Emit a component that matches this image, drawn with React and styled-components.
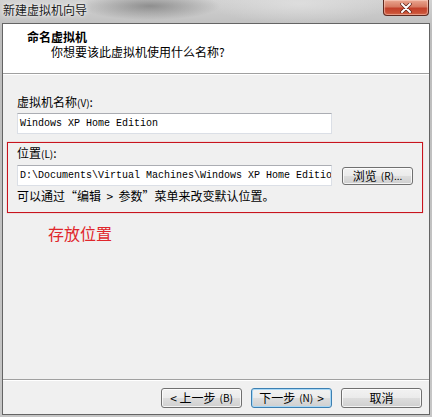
import React from 'react';
import styled, { createGlobalStyle } from 'styled-components';

const GlobalStyle = createGlobalStyle`
  html, body { margin: 0; padding: 0; }
  body {
    width: 432px;
    height: 417px;
    overflow: hidden;
    font-family: "Noto Sans CJK SC", "DejaVu Sans", sans-serif;
    font-size: 12px;
    color: #000;
  }
`;

const cjk = `"Noto Sans CJK SC", "DejaVu Sans", sans-serif`;

const Frame = styled.div`
  width: 432px;
  height: 417px;
  display: flex;
  flex-direction: column;
  box-sizing: border-box;
  background:
    radial-gradient(ellipse 70px 14px at 150px 6px, rgba(90, 90, 90, 0.55), transparent),
    radial-gradient(ellipse 90px 20px at 300px 4px, rgba(230, 230, 230, 0.6), transparent),
    linear-gradient(180deg, #d2d2d2 0%, #bdbdbd 30px, #c6c6c6 100%);
`;

const TitleBar = styled.div`
  height: 23px;
  display: flex;
  justify-content: space-between;
  align-items: flex-start;
  padding: 0 2px 0 3px;
  flex-shrink: 0;
`;

const TitleText = styled.div`
  font-family: ${cjk};
  font-size: 12px;
  line-height: 14px;
  margin-top: 3px;
  color: #1a1a1a;
  text-shadow: 0 0 6px rgba(255, 255, 255, 0.9), 0 0 3px rgba(255, 255, 255, 0.9);
`;

const CloseButton = styled.div`
  width: 46px;
  height: 16px;
  margin-right: 1px;
  box-sizing: border-box;
  border: 1px solid #5e2a20;
  border-top: none;
  border-radius: 0 0 4px 4px;
  background: linear-gradient(180deg, #e9a58f 0%, #d77a62 45%, #c2402a 55%, #cf5a3c 100%);
  box-shadow: inset 0 0 1px 1px rgba(255, 220, 210, 0.55);
  display: flex;
  align-items: center;
  justify-content: center;
`;

const Client = styled.div`
  flex: 1;
  margin: 0 2px 2px 2px;
  border: 1px solid #646464;
  background: #f0f0f0;
  display: flex;
  flex-direction: column;
  min-height: 0;
`;

const Header = styled.div`
  height: 49px;
  background: #fff;
  padding: 6px 0 0 24px;
  box-sizing: border-box;
  flex-shrink: 0;
`;

const HeaderTitle = styled.div`
  font-weight: bold;
  font-size: 12px;
  line-height: 14px;
`;

const HeaderSub = styled.div`
  font-size: 12px;
  line-height: 14px;
  margin: 1px 0 0 24px;
`;

const Divider = styled.div`
  height: 1px;
  background: #a0a0a0;
  border-bottom: 1px solid #fff;
  flex-shrink: 0;
`;

const Body = styled.div`
  flex: 1;
  padding: 20px 0 0 14px;
`;

const Label = styled.div`
  font-size: 12px;
  line-height: 14px;
`;

const TextBox = styled.div`
  width: ${p => p.$w}px;
  height: 21px;
  box-sizing: border-box;
  margin-top: ${p => p.$mt || 0}px;
  background: #fff;
  border: 1px solid #dbdfe6;
  border-top-color: #abadb3;
  padding: 0 2px;
  font-family: "Liberation Mono", "DejaVu Sans Mono", monospace;
  font-size: 10px;
  line-height: 19px;
  white-space: nowrap;
  overflow: hidden;
`;

const Marked = styled.div`
  margin: 8px 0 0 -10px;
  width: 416px;
  height: 71px;
  box-sizing: border-box;
  border: 1px solid #c8141e;
  box-shadow: 0 0 1px rgba(220, 40, 40, 0.5);
  padding: 3px 0 0 9px;
`;

const Row = styled.div`
  display: flex;
  align-items: center;
  gap: 10px;
  margin-top: 4px;
`;

const Button = styled.div`
  width: ${p => p.$w}px;
  height: ${p => p.$h}px;
  box-sizing: border-box;
  border: 1px solid ${p => (p.$focus ? '#3c7fb1' : '#707070')};
  border-radius: 3px;
  background: linear-gradient(180deg, #f2f2f2 0%, #ebebeb 48%, #dddddd 52%, #cfcfcf 100%);
  box-shadow: ${p => (p.$focus ? 'inset 0 0 0 1px #a8d8f6' : 'inset 0 0 0 1px rgba(255,255,255,0.75)')};
  display: flex;
  align-items: center;
  justify-content: center;
  gap: 4px;
  font-size: 12px;
  line-height: 14px;
  white-space: nowrap;
`;

const Hint = styled.div`
  margin-top: 3px;
  font-size: 12px;
  line-height: 14px;
  white-space: pre;
`;

const Note = styled.div`
  margin: 10px 0 0 31px;
  color: #e0262b;
  font-size: 16px;
  line-height: 20px;
`;

const Footer = styled.div`
  flex-shrink: 0;
`;

const ButtonRow = styled.div`
  display: flex;
  justify-content: flex-end;
  gap: 9px;
  padding: 7px 7px 6px 0;
`;

const Small = styled.span`
  font-size: 10px;
`;

export default function App() {
  return (
    <>
      <GlobalStyle />
      <Frame>
        <TitleBar>
          <TitleText>新建虚拟机向导</TitleText>
          <CloseButton>
            <svg width="12" height="10" viewBox="0 0 12 10">
              <path d="M2 1 L10 9 M10 1 L2 9" stroke="#5a2218" strokeWidth="3.4" strokeLinecap="round" />
              <path d="M2 1 L10 9 M10 1 L2 9" stroke="#fff" strokeWidth="2" strokeLinecap="round" />
            </svg>
          </CloseButton>
        </TitleBar>
        <Client>
          <Header>
            <HeaderTitle>命名虚拟机</HeaderTitle>
            <HeaderSub>你想要该此虚拟机使用什么名称?</HeaderSub>
          </Header>
          <Divider />
          <Body>
            <Label>虚拟机名称<Small>(V)</Small>:</Label>
            <TextBox $w={315} $mt={3}>Windows XP Home Edition</TextBox>
            <Marked>
              <Label>位置<Small>(L)</Small>:</Label>
              <Row>
                <TextBox $w={315}>D:\Documents\Virtual Machines\Windows XP Home Edition</TextBox>
                <Button $w={71} $h={18}>浏览<Small>(R)...</Small></Button>
              </Row>
              <Hint>{'可以通过“编辑  >  参数”菜单来改变默认位置。'}</Hint>
            </Marked>
            <Note>存放位置</Note>
          </Body>
          <Footer>
            <Divider />
            <ButtonRow>
              <Button $w={81} $h={20}>&lt; 上一步<Small>(B)</Small></Button>
              <Button $w={81} $h={20} $focus>下一步<Small>(N)</Small> &gt;</Button>
              <Button $w={81} $h={20}>取消</Button>
            </ButtonRow>
          </Footer>
        </Client>
      </Frame>
    </>
  );
}
